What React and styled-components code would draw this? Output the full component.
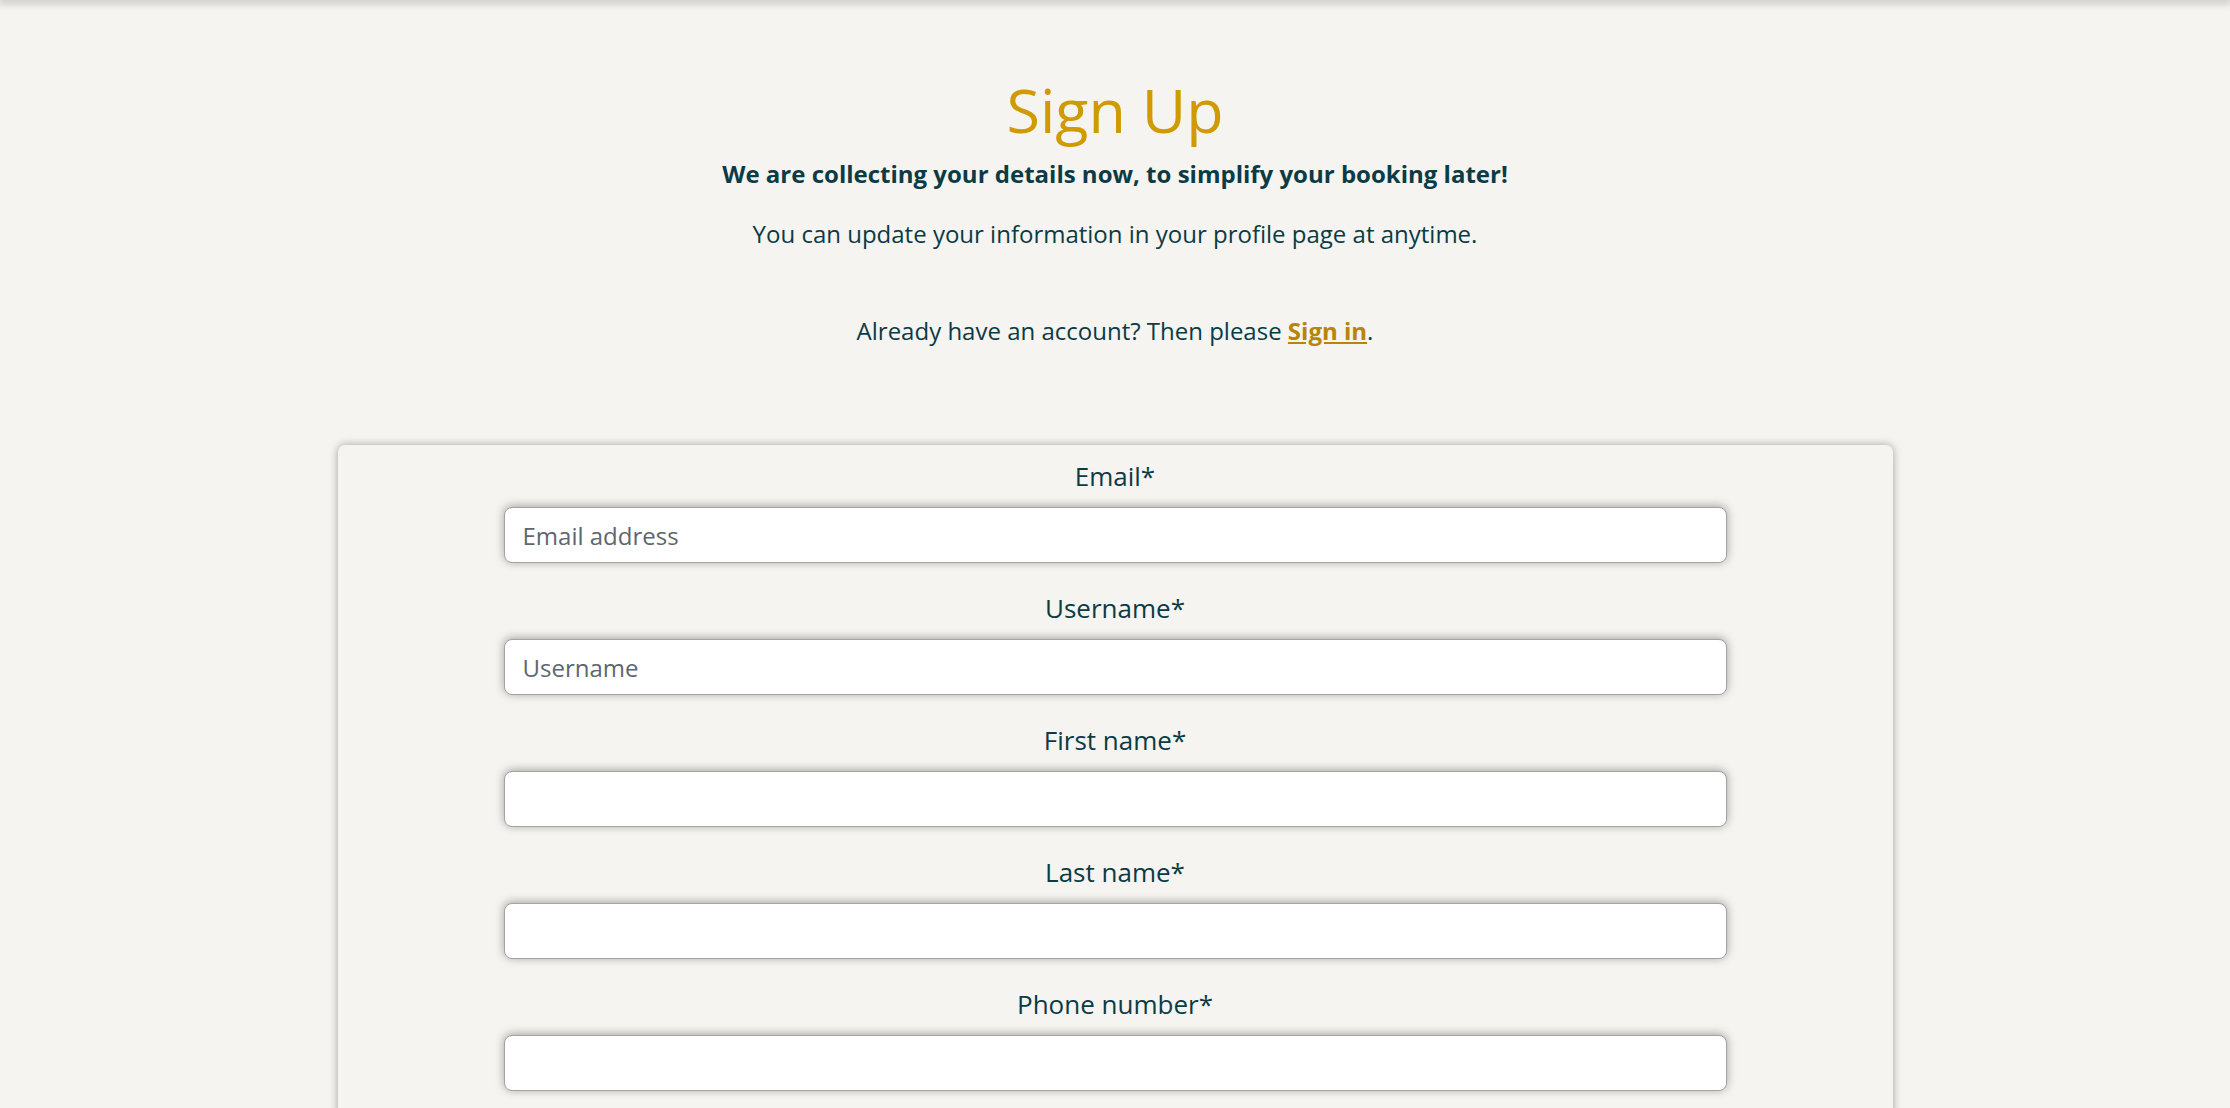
import React from 'react'
import styled, { createGlobalStyle } from 'styled-components'

const GlobalStyle = createGlobalStyle`
body {
    margin: 0;
    background: #f5f4f0;
    font-family: "Open Sans", "Noto Sans", sans-serif;
    color: #0b3b44;
}
`

const fields = [
    { label: 'Email*', placeholder: 'Email address', type: 'email' },
    { label: 'Username*', placeholder: 'Username', type: 'text' },
    { label: 'First name*', placeholder: '', type: 'text' },
    { label: 'Last name*', placeholder: '', type: 'text' },
    { label: 'Phone number*', placeholder: '', type: 'tel' },
]

const App = () => {
    return (
        <>
            <GlobalStyle />
            <TopShadow />
            <Section>
                <Intro>
                    <Title>Sign Up</Title>
                    <Lead>We are collecting your details now, to simplify your booking later!</Lead>
                    <Text>You can update your information in your profile page at anytime.</Text>
                    <SignInText>
                        Already have an account? Then please <SignInLink href="#">Sign in</SignInLink>.
                    </SignInText>
                </Intro>

                <Card>
                    {fields.map(f => (
                        <Field key={f.label}>
                            <Label>{f.label}</Label>
                            <Input type={f.type} placeholder={f.placeholder} />
                        </Field>
                    ))}
                </Card>
            </Section>
        </>
    )
}

const TopShadow = styled.div`
height: 0;
width: 100%;
box-shadow: 0 0 9px 2px rgba(0, 0, 0, 0.35);
`
const Section = styled.div`
display: flex;
flex-direction: column;
align-items: center;
padding-top: 73px;
`
const Intro = styled.div`
display: flex;
flex-direction: column;
align-items: center;
text-align: center;
`
const Title = styled.h1`
margin: 0;
font-size: 61px;
font-weight: 400;
line-height: 1.2;
color: #cf9a02;
`
const Lead = styled.p`
margin: 10px 0 0;
font-size: 24px;
font-weight: 700;
line-height: 1.5;
`
const Text = styled.p`
margin: 24px 0 0;
font-size: 24px;
line-height: 1.5;
`
const SignInText = styled(Text)`
margin-top: 61px;
`
const SignInLink = styled.a`
color: #b8850a;
font-weight: 700;
text-decoration: underline;
`
const Card = styled.div`
display: flex;
flex-direction: column;
align-items: center;
width: 1555px;
margin-top: 96px;
padding: 12px 0 40px;
box-sizing: border-box;
background: #f5f4f0;
border-radius: 7px;
box-shadow: 0 0 9px rgba(0, 0, 0, 0.35);
`
const Field = styled.div`
display: flex;
flex-direction: column;
align-items: center;
width: 1223px;
margin-bottom: 26px;
`
const Label = styled.label`
font-size: 26px;
line-height: 1.5;
margin-bottom: 11px;
`
const Input = styled.input`
width: 100%;
height: 56px;
box-sizing: border-box;
padding: 0 18px;
font-family: "Open Sans", "Noto Sans", sans-serif;
font-size: 24px;
color: #0b3b44;
background: #fff;
border: 1px solid #a3a3a3;
border-radius: 8px;
box-shadow: 0 -1px 10px rgba(0, 0, 0, 0.35);
outline: none;
&::placeholder {
    color: #5e6670;
}
`

export default App
